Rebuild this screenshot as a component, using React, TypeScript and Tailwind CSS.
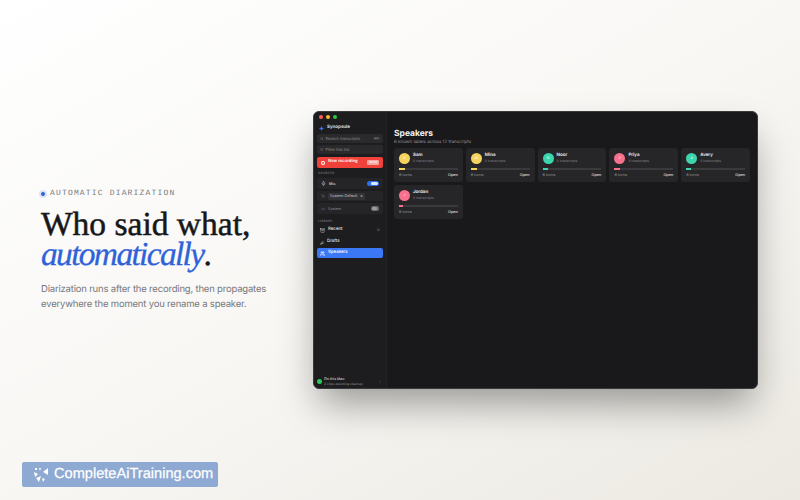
import { Search, ListFilter, Mic, Settings2, Volume2, Archive, Feather, Users, ChevronRight, Sparkle } from 'lucide-react';

const speakers = [
  { name: 'Sam', initial: 'S', color: 'bg-[#f4d35e]', bar: 'bg-[#f4d35e]', fill: 'w-[10%]' },
  { name: 'Mina', initial: 'M', color: 'bg-[#f4d35e]', bar: 'bg-[#f4d35e]', fill: 'w-[10%]' },
  { name: 'Noor', initial: 'N', color: 'bg-[#3dd6ac]', bar: 'bg-[#3dd6ac]', fill: 'w-[10%]' },
  { name: 'Priya', initial: 'P', color: 'bg-[#f7708c]', bar: 'bg-[#f7708c]', fill: 'w-[10%]' },
  { name: 'Avery', initial: 'A', color: 'bg-[#3dd6ac]', bar: 'bg-[#3dd6ac]', fill: 'w-[8%]' },
  { name: 'Jordan', initial: 'J', color: 'bg-[#f7708c]', bar: 'bg-[#f7708c]', fill: 'w-[6%]' },
];

function SpeakerCard({ name, initial, color, bar, fill }: (typeof speakers)[number]) {
  return (
    <div className="h-[34px] rounded-[3px] bg-[#262628] px-[5px] pt-[5px]">
      <div className="flex items-center gap-[3px]">
        <span className={`flex h-[11px] w-[11px] items-center justify-center rounded-full text-[3.5px] font-semibold text-white/70 ${color}`}>
          {initial}
        </span>
        <div className="leading-none">
          <p className="text-[4.5px] leading-[6px] font-semibold text-[#f2f2f4]">{name}</p>
          <p className="text-[3.5px] leading-[5px] text-[#85858a]">8 transcripts</p>
        </div>
      </div>
      <div className="mt-[4px] h-[1.5px] bg-[#3a3a3d]">
        <div className={`h-full ${bar} ${fill}`} />
      </div>
      <div className="mt-[2px] flex justify-between text-[3.8px] leading-[6px]">
        <span className="text-[#9a9a9f]">8 turns</span>
        <span className="font-medium text-[#e5e5e7]">Open</span>
      </div>
    </div>
  );
}

function Sidebar() {
  return (
    <aside className="flex w-[73px] shrink-0 flex-col border-r border-[#232325] bg-[#1d1d1f] px-[3px] pt-[3px] pb-[2px]">
      <div className="flex gap-[3px] pl-[2px]">
        <span className="h-[4px] w-[4px] rounded-full bg-[#ff5f57]" />
        <span className="h-[4px] w-[4px] rounded-full bg-[#febc2e]" />
        <span className="h-[4px] w-[4px] rounded-full bg-[#28c840]" />
      </div>
      <div className="mt-[6px] flex h-[7px] items-center gap-[3px] pl-[2px]">
        <Sparkle className="h-[5px] w-[5px] fill-[#3b78f6] text-[#3b78f6]" />
        <span className="text-[4.5px] font-semibold text-[#e8e8ea]">Synopsule</span>
      </div>
      <div className="mt-[2px] flex h-[9px] items-center gap-[2px] rounded-[2px] bg-[#2a2a2c] px-[3px] text-[4px] text-[#8e8e93]">
        <Search className="h-[3.5px] w-[3.5px]" />
        <span>Search transcripts</span>
        <span className="ml-auto rounded-[1px] bg-[#3a3a3c] px-[1.5px] text-[2.5px]">⌘K</span>
      </div>
      <div className="mt-[2px] flex h-[9px] items-center gap-[2px] rounded-[2px] bg-[#2a2a2c] px-[3px] text-[4px] text-[#8e8e93]">
        <ListFilter className="h-[3.5px] w-[3.5px]" />
        <span>Filter this list</span>
      </div>
      <div className="mt-[3px] flex h-[11px] items-center gap-[2px] rounded-[2px] bg-[#f0413a] px-[4px] text-[4.2px] font-semibold text-white">
        <span className="flex h-[4px] w-[4px] items-center justify-center rounded-full bg-white">
          <span className="h-[2px] w-[2px] rounded-full bg-[#f0413a]" />
        </span>
        <span className="ml-[1px]">New recording</span>
        <span className="ml-auto rounded-[1px] bg-[#f8a5a0] px-[2px] text-[2.8px] text-white">⌘⇧R</span>
      </div>

      <p className="mt-[3px] pl-[1px] text-[3px] leading-[5px] font-semibold tracking-[0.1em] text-[#6e6e73]">SOURCES</p>
      <div className="mt-[2px] flex h-[11px] items-center gap-[3px] rounded-[2px] bg-[#252527] px-[4px]">
        <Mic className="h-[5px] w-[5px] text-[#d8d8da]" />
        <span className="text-[3.8px] font-medium text-[#d8d8da]">Mic</span>
        <span className="ml-auto flex h-[5px] w-[12px] items-center justify-end rounded-full bg-[#2f6fe8] px-[1px]">
          <span className="h-[3.5px] w-[7px] rounded-full bg-white/85" />
        </span>
      </div>
      <div className="mt-[2px] flex h-[10px] items-center gap-[3px] rounded-[2px] bg-[#252527] px-[4px]">
        <Settings2 className="h-[4px] w-[4px] text-[#77777c]" />
        <span className="flex h-[7px] items-center gap-[3px] rounded-[1.5px] bg-[#323235] px-[2px] text-[3.8px] text-[#c8c8cb]">
          System Default <span className="text-[3px]">⇅</span>
        </span>
      </div>
      <div className="mt-[2px] flex h-[11px] items-center gap-[3px] rounded-[2px] bg-[#252527] px-[4px]">
        <Volume2 className="h-[4px] w-[4px] text-[#77777c]" />
        <span className="text-[3.8px] text-[#8e8e93]">System</span>
        <span className="ml-auto flex h-[5px] w-[8px] items-center rounded-full bg-[#6e6e72]">
          <span className="ml-[1px] h-[3.5px] w-[5px] rounded-full bg-[#9a9a9e]" />
        </span>
      </div>

      <p className="mt-[5px] pl-[1px] text-[3px] leading-[5px] font-semibold tracking-[0.1em] text-[#6e6e73]">LIBRARY</p>
      <div className="mt-[1px] flex h-[11px] items-center gap-[3px] px-[3px] text-[4.4px] font-medium text-[#e0e0e2]">
        <Archive className="h-[5px] w-[5px]" />
        <span>Recent</span>
        <span className="ml-auto text-[3.5px] text-[#6e6e73]">12</span>
      </div>
      <div className="mt-[1px] flex h-[11px] items-center gap-[3px] px-[3px] text-[4.4px] font-medium text-[#e0e0e2]">
        <Feather className="h-[4px] w-[4px]" />
        <span>Drafts</span>
      </div>
      <div className="flex h-[10px] items-center gap-[3px] rounded-[2px] bg-[#3b78f6] px-[3px] text-[4.4px] font-medium text-white">
        <Users className="h-[5px] w-[5px]" strokeWidth={3} />
        <span>Speakers</span>
      </div>

      <div className="mt-auto flex items-center gap-[2px]">
        <span className="h-[5px] w-[5px] rounded-full bg-[#30c75a]" />
        <div>
          <p className="text-[3.6px] leading-[4.5px] font-medium text-[#d8d8da]">On this Mac</p>
          <p className="text-[3.4px] leading-[4.5px] text-[#8e8e93]">2 clips awaiting cleanup</p>
        </div>
        <ChevronRight className="mr-[1px] ml-auto h-[4px] w-[4px] text-[#77777c]" />
      </div>
    </aside>
  );
}

export default function App() {
  return (
    <div className="relative flex h-[500px] w-[800px] items-center overflow-hidden bg-[linear-gradient(150deg,#ffffff_0%,#f8f7f4_50%,#ece9e2_100%)] font-['Inter',sans-serif] antialiased [text-rendering:geometricPrecision]">
      <div className="w-[313px] shrink-0 pl-[41px]">
        <div className="flex items-center gap-[5px]">
          <span className="h-[4px] w-[4px] rounded-full bg-[#2f62d9] ring-2 ring-[#2f62d9]/15" />
          <span className="font-['Liberation_Mono',monospace] text-[8px] tracking-[0.146em] text-[#77777a]">AUTOMATIC DIARIZATION</span>
        </div>
        <h1 className="mt-[10px] font-['Liberation_Serif',serif] text-[33.5px] leading-[30px] text-[#17171a] [-webkit-text-stroke:0.5px_#17171a]">
          Who said what,
          <br />
          <em className="tracking-[-0.05em] text-[#2f62d9] [-webkit-text-stroke:0.3px_#2f62d9]">automatically</em>.
        </h1>
        <p className="mt-[12px] text-[9.5px] leading-[15px] tracking-[-0.02em] text-[#77777a]">
          Diarization runs after the recording, then propagates
          <br />
          everywhere the moment you rename a speaker.
        </p>
      </div>

      <div className="flex h-[278px] w-[445px] overflow-hidden rounded-[6px] border border-[#3a3a3c] bg-[#19191b] shadow-[0_20px_36px_-6px_rgba(0,0,0,0.38)]">
        <Sidebar />
        <main className="min-w-0 flex-1 px-[7px] pt-[17px]">
          <h2 className="text-[8.5px] leading-[10px] font-bold text-[#f2f2f4]">Speakers</h2>
          <p className="text-[4.5px] leading-[7px] text-[#8e8e93]">6 known labels across 12 transcripts</p>
          <div className="mt-[2px] grid grid-cols-5 gap-[3px]">
            {speakers.map(s => (
              <SpeakerCard key={s.name} {...s} />
            ))}
          </div>
        </main>
      </div>

      <div className="absolute bottom-[13px] left-[22px] flex h-[25px] w-[196px] items-center gap-[5px] rounded-[2px] bg-[#8ea9d2] pl-[11px]">
        <svg viewBox="0 0 16 16" className="h-[16px] w-[16px] fill-white">
          <polygon points="1,5 5,7 2,10" />
          <polygon points="2,1 4,1 4,3 2,3" />
          <polygon points="6,1 8,1 7,4" />
          <polygon points="15,1 15,8 10,5" />
          <polygon points="3,11 8,9 6,15" />
          <polygon points="9,11 12,12 10,15" />
        </svg>
        <span className="font-['Liberation_Sans',sans-serif] text-[14.6px] text-white [-webkit-text-stroke:0.25px_#ffffff]">CompleteAiTraining.com</span>
      </div>
    </div>
  );
}
